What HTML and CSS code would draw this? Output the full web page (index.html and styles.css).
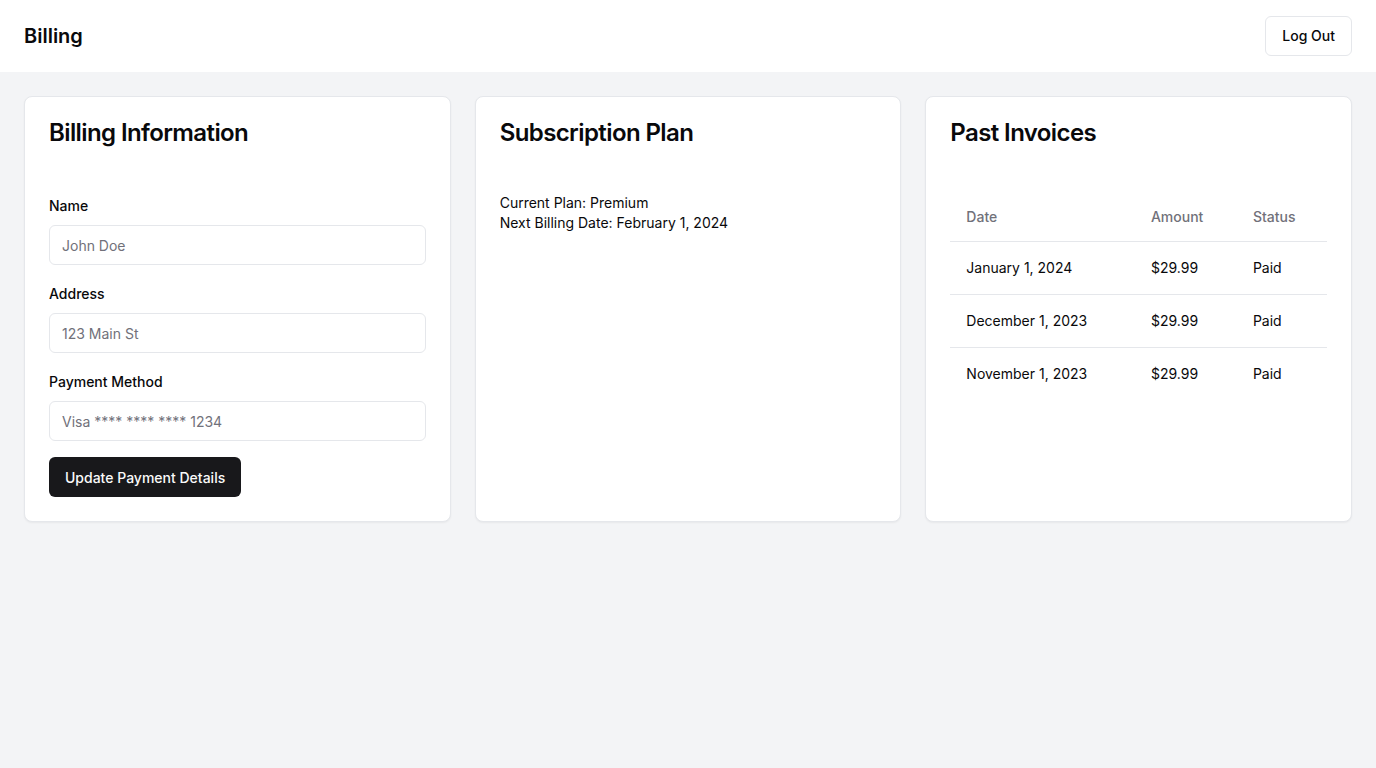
FILE: index.html
```html
<!DOCTYPE html>
<html lang="en">
<head>
<meta charset="utf-8">
<title>Billing</title>
<link rel="stylesheet" href="styles.css">
</head>
<body>
<header class="topbar">
  <h1 class="brand">Billing</h1>
  <button class="btn-outline">Log Out</button>
</header>
<main class="grid">
  <section class="card">
    <div class="card-header"><h2 class="card-title">Billing Information</h2></div>
    <div class="card-content">
      <form class="form">
        <div class="field">
          <label class="label" for="name">Name</label>
          <input class="input" id="name" placeholder="John Doe">
        </div>
        <div class="field">
          <label class="label" for="address">Address</label>
          <input class="input" id="address" placeholder="123 Main St">
        </div>
        <div class="field">
          <label class="label" for="payment">Payment Method</label>
          <input class="input" id="payment" placeholder="Visa **** **** **** 1234">
        </div>
        <button type="button" class="btn-primary">Update Payment Details</button>
      </form>
    </div>
  </section>
  <section class="card">
    <div class="card-header"><h2 class="card-title">Subscription Plan</h2></div>
    <div class="card-content">
      <p class="text">Current Plan: Premium</p>
      <p class="text">Next Billing Date: February 1, 2024</p>
    </div>
  </section>
  <section class="card">
    <div class="card-header"><h2 class="card-title">Past Invoices</h2></div>
    <div class="card-content">
      <table class="table">
        <thead>
          <tr><th>Date</th><th>Amount</th><th>Status</th></tr>
        </thead>
        <tbody>
          <tr><td>January 1, 2024</td><td>$29.99</td><td>Paid</td></tr>
          <tr><td>December 1, 2023</td><td>$29.99</td><td>Paid</td></tr>
          <tr><td>November 1, 2023</td><td>$29.99</td><td>Paid</td></tr>
        </tbody>
      </table>
    </div>
  </section>
</main>
</body>
</html>
```
FILE: styles.css
```css
* { box-sizing: border-box; }
html, body { margin: 0; padding: 0; }
body {
  font-family: Inter, "Noto Sans", sans-serif;
  color: #09090b;
  background: #f3f4f6;
  min-height: 768px;
}
.topbar {
  height: 72px;
  background: #ffffff;
  display: flex;
  align-items: center;
  justify-content: space-between;
  padding: 0 24px;
}
.brand {
  margin: 0;
  font-size: 20px;
  line-height: 28px;
  font-weight: 600;
}
.btn-outline {
  height: 40px;
  padding: 0 16px 1px;
  border: 1px solid #e5e7eb;
  border-radius: 6px;
  background: #ffffff;
  font-family: inherit;
  font-size: 14px;
  line-height: 20px;
  font-weight: 500;
  color: #09090b;
}
.grid {
  display: grid;
  grid-template-columns: repeat(3, 1fr);
  gap: 24px;
  padding: 24px;
}
.card {
  background: #ffffff;
  border: 1px solid #e5e7eb;
  border-radius: 8px;
  box-shadow: 0 1px 2px rgba(0,0,0,0.05);
}
.card-header { padding: 24px; }
.card-title {
  margin: 0;
  font-size: 24px;
  line-height: 24px;
  font-weight: 600;
  letter-spacing: -0.6px;
}
.card-content { padding: 24px 24px 24px; }
.form { display: flex; flex-direction: column; gap: 19px; padding-top: 3px; }
.field { display: flex; flex-direction: column; gap: 9px; }
.label {
  font-size: 14px;
  line-height: 20px;
  font-weight: 500;
}
.input {
  height: 40px;
  border: 1px solid #e5e7eb;
  border-radius: 6px;
  padding: 0 12px;
  font-family: inherit;
  font-size: 14px;
  color: #09090b;
  background: #ffffff;
}
.input::placeholder { color: #71717a; }
.btn-primary {
  align-self: flex-start;
  margin-top: -3px;
  height: 40px;
  padding: 0 16px;
  border: none;
  border-radius: 6px;
  background: #18181b;
  color: #fafafa;
  font-family: inherit;
  font-size: 14px;
  font-weight: 500;
}
.text { margin: 0; font-size: 14px; line-height: 20px; }
.table {
  width: 100%;
  border-collapse: collapse;
  font-size: 14px;
  line-height: 20px;
}
.table th {
  height: 48px;
  padding: 0 16px;
  text-align: left;
  font-weight: 500;
  color: #71717a;
  border-bottom: 1px solid #e5e7eb;
}
.table td {
  padding: 16px;
  border-bottom: 1px solid #e5e7eb;
}
.table tbody tr:last-child td { border-bottom: none; }
```
